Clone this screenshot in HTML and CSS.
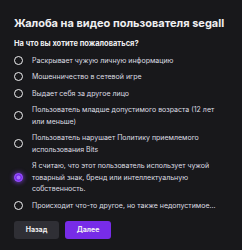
FILE: index.html
```html
<!DOCTYPE html>
<html lang="ru">
<head>
    <meta charset="UTF-8">
    <title>Жалоба</title>
    <link rel="stylesheet" href="styles.css">
</head>
<body>
    <div class="report">
        <h1 class="report-title">Жалоба на видео пользователя segall</h1>
        <h2 class="report-question">На что вы хотите пожаловаться?</h2>
        <ul class="reasons">
            <li class="reason"><span class="radio"></span><span class="reason-text">Раскрывает чужую личную информацию</span></li>
            <li class="reason"><span class="radio"></span><span class="reason-text">Мошенничество в сетевой игре</span></li>
            <li class="reason"><span class="radio"></span><span class="reason-text">Выдает себя за другое лицо</span></li>
            <li class="reason"><span class="radio"></span><span class="reason-text">Пользователь младше допустимого возраста (12 лет или меньше)</span></li>
            <li class="reason"><span class="radio"></span><span class="reason-text">Пользователь нарушает Политику приемлемого использования Bits</span></li>
            <li class="reason"><span class="radio checked"></span><span class="reason-text">Я считаю, что этот пользователь использует чужой товарный знак, бренд или интеллектуальную собственность.</span></li>
            <li class="reason"><span class="radio"></span><span class="reason-text">Происходит что-то другое, но также недопустимое...</span></li>
        </ul>
        <div class="actions">
            <button type="button" class="btn btn-back">Назад</button>
            <button type="button" class="btn btn-next">Далее</button>
        </div>
    </div>
</body>
</html>
```

FILE: styles.css
```css
body {
    margin: 0;
    background-color: #18181b;
    font-family: Inter, "Noto Sans", sans-serif;
    color: #efeff1;
}
.report {
    padding: 16px 14px 14px 14px;
}
.report-title {
    margin: 0;
    font-size: 11px;
    font-weight: 700;
    line-height: 14px;
}
.report-question {
    margin: 9px 0 3px 0;
    font-size: 7.5px;
    font-weight: 700;
    line-height: 10px;
}
.reasons {
    list-style: none;
    margin: 0;
    padding: 0;
}
.reason {
    display: flex;
    align-items: center;
    padding: 2.5px 0;
}
.radio {
    flex: none;
    width: 7px;
    height: 7px;
    border: 1.6px solid #efeff1;
    border-radius: 50%;
    margin: 0 9px 0 0;
}
.radio.checked {
    border-color: #9147ff;
    background-color: #a970ff;
    box-shadow: inset 0 0 0 1.5px #772ce8, 0 0 4px 1px rgba(145, 71, 255, 0.6);
}
.reason-text {
    font-size: 7px;
    line-height: 11.5px;
    color: #dedee3;
}
.actions {
    display: flex;
    gap: 6px;
    margin-top: 7px;
}
.btn {
    height: 18px;
    padding: 0 9px;
    border: none;
    border-radius: 3px;
    font-family: Inter, "Noto Sans", sans-serif;
    font-size: 7px;
    font-weight: 700;
    color: #efeff1;
    cursor: pointer;
}
.btn-back {
    width: 45px;
    background-color: #2f2f35;
}
.btn-next {
    width: 46px;
    background-color: #772ce8;
}
```
